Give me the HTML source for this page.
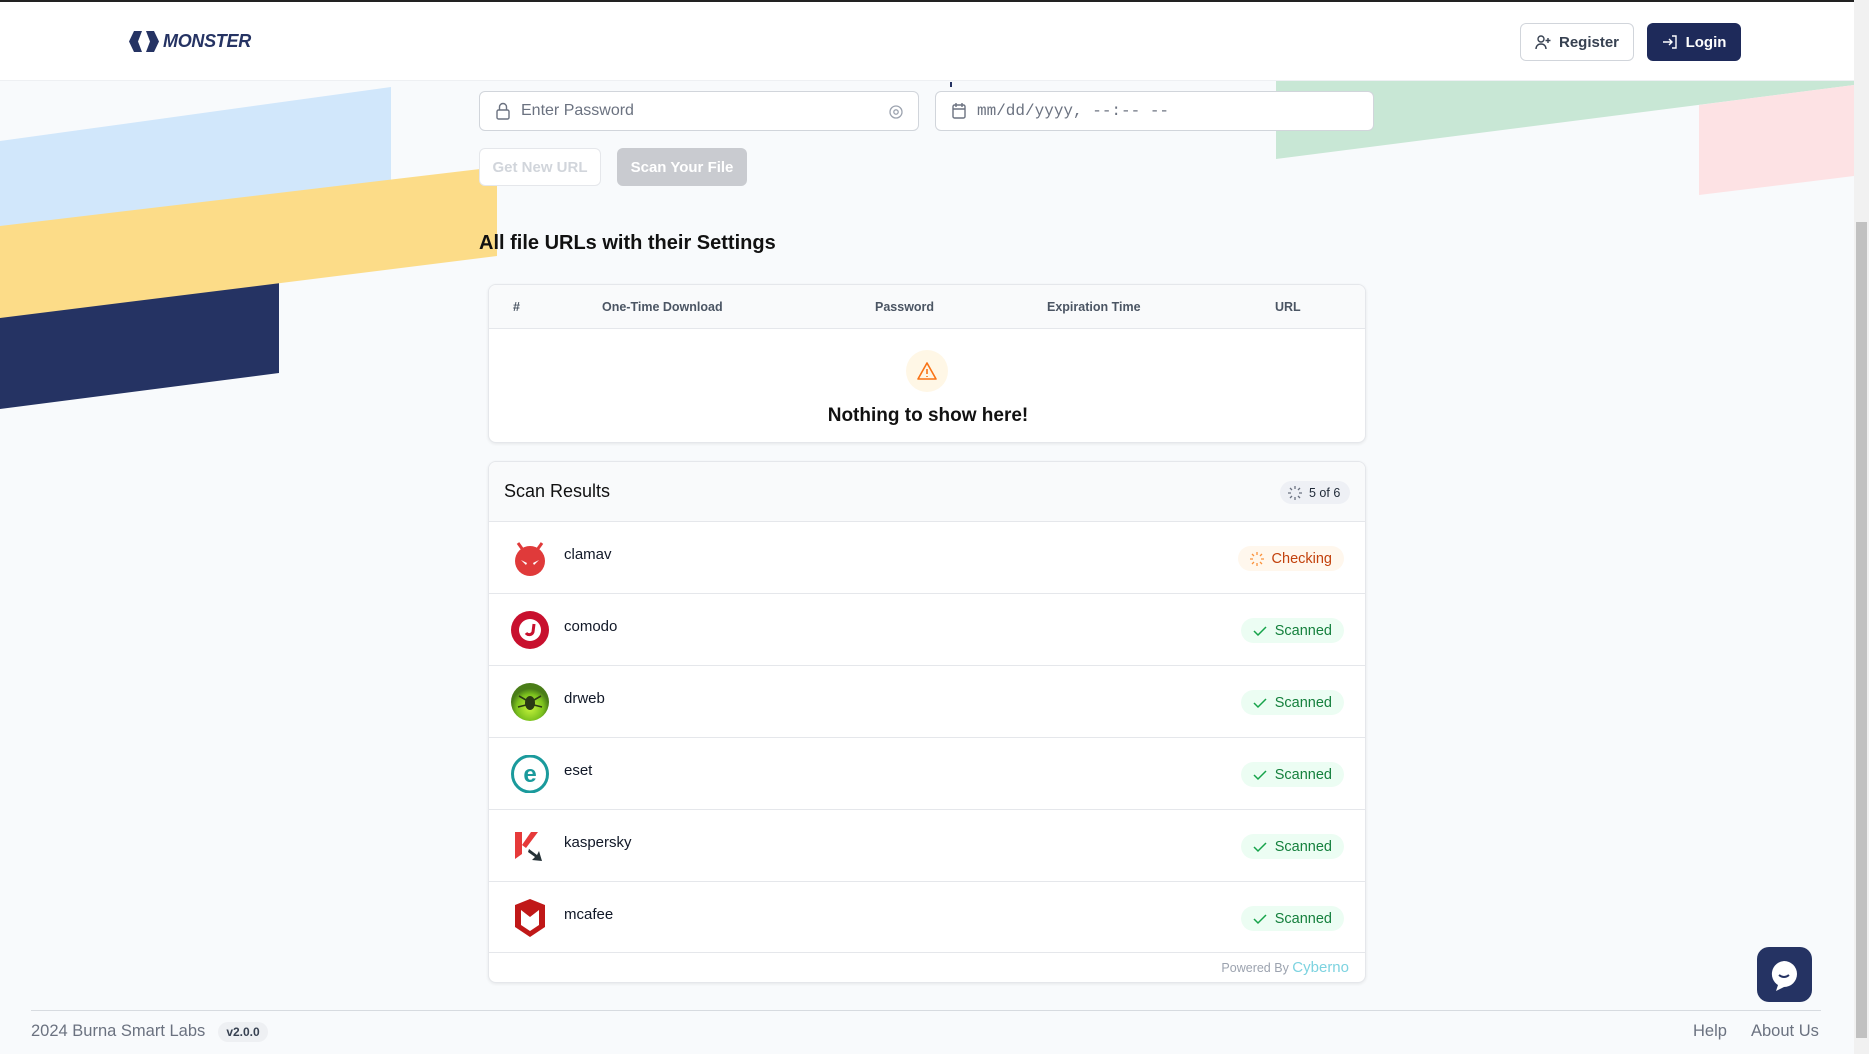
<!DOCTYPE html>
<html><head><meta charset="utf-8"><style>
*{box-sizing:border-box;margin:0;padding:0}
body{width:1869px;height:1054px;overflow:hidden;background:#f8fafc;font-family:"Liberation Sans",sans-serif;position:relative;color:#111827}
.abs{position:absolute}
.hdr{left:0;top:0;width:1854px;height:81px;background:#fff;border-top:2px solid #222;border-bottom:1px solid #eef0f3}
.btn{position:absolute;top:23px;height:38px;border-radius:6px;font-size:15px;font-weight:bold;display:flex;align-items:center;justify-content:center;gap:8px}
.inp{position:absolute;top:91px;height:40px;background:#fff;border:1px solid #d1d5db;border-radius:6px;display:flex;align-items:center;padding-left:15px;gap:10px;color:#6b7280;font-size:16px}
.card{position:absolute;left:488px;width:878px;background:#fff;border:1px solid #e5e7eb;border-radius:8px;box-shadow:0 1px 3px rgba(0,0,0,.08);overflow:hidden}
.th{position:absolute;top:0;line-height:44px;font-size:12.5px;font-weight:bold;color:#4b5563}
.row{position:absolute;left:0;width:878px;height:72px;border-top:1px solid #e5e7eb}
.row .ic{position:absolute;left:22px;top:17px;width:38px;height:38px}
.row .nm{position:absolute;left:75px;top:24px;font-size:15px;color:#111827}
.pill{position:absolute;right:23px;top:24px;height:25px;border-radius:13px;background:#ecfdf3;color:#15803d;font-size:14.5px;display:flex;align-items:center;gap:8px;padding:0 12px}
</style></head><body>
<svg class="abs" style="left:0;top:0" width="1869" height="1054">
<polygon points="0,141 391,87 391,220 0,270" fill="#d1e7fb"/>
<polygon points="0,300 279,268 279,373 0,409" fill="#253363"/>
<polygon points="0,226 497,167 497,256 0,318" fill="#fcdc88"/>
<polygon points="1276,81 1854,81 1854,85 1276,159" fill="#c8e7d5"/>
<polygon points="1699,105 1854,85 1854,176 1699,195" fill="#fde2e4"/>
</svg>
<div class="abs hdr"></div>
<div class="abs" style="left:128px;top:31px;display:flex;align-items:center;gap:3px">
<svg width="32" height="21" viewBox="0 0 32 21"><path d="M6 0h8l-4 10.5 4 10.5H6L1 10.5z" fill="#253363"/><path d="M18 0h8l5 10.5-5 10.5h-8l4-10.5z" fill="#253363"/></svg>
<span style="font-size:18px;font-weight:bold;font-style:italic;color:#253363;letter-spacing:-0.3px">MONSTER</span></div>
<div class="btn" style="left:1520px;width:114px;background:#fff;border:1px solid #d1d5db;color:#374151">
<svg width="16" height="16" viewBox="0 0 16 16" fill="none" stroke="#374151" stroke-width="1.4"><circle cx="6" cy="5" r="3"/><path d="M1 15c0-3 2-5 5-5s5 2 5 5M13 4v5M10.5 6.5h5"/></svg>Register</div>
<div class="btn" style="left:1647px;width:94px;background:#1e2a5a;color:#fff">
<svg width="16" height="16" viewBox="0 0 16 16" fill="none" stroke="#fff" stroke-width="1.4"><path d="M1 8h9M7 5l3 3-3 3M10 2h4v12h-4"/></svg>Login</div>
<div class="abs" style="left:950px;top:82px;width:2px;height:5px;background:#253363"></div>
<div class="inp" style="left:479px;width:440px">
<svg width="16" height="18" viewBox="0 0 16 18" fill="none" stroke="#6b7280" stroke-width="1.4"><rect x="2" y="8" width="12" height="9" rx="1.5"/><path d="M4.5 8V5a3.5 3.5 0 017 0v3"/></svg>Enter Password
<svg class="abs" style="right:14px;top:12px" width="16" height="16" viewBox="0 0 16 16" fill="none" stroke="#9ca3af" stroke-width="1.3"><circle cx="8" cy="8" r="6"/><circle cx="8" cy="8" r="2.2"/></svg></div>
<div class="inp" style="left:935px;width:439px;font-family:'Liberation Mono',monospace;font-size:16px">
<svg width="16" height="18" viewBox="0 0 16 18" fill="none" stroke="#6b7280" stroke-width="1.4"><rect x="2" y="3" width="12" height="13" rx="1.5"/><path d="M2 7h12M5 1v4M11 1v4"/></svg>mm/dd/yyyy, --:-- --</div>
<div class="abs" style="left:479px;top:148px;width:122px;height:38px;background:#fff;border:1px solid #e5e7eb;border-radius:6px;color:#d1d5db;font-size:15px;font-weight:bold;display:flex;align-items:center;justify-content:center">Get New URL</div>
<div class="abs" style="left:617px;top:148px;width:130px;height:38px;background:#c9cbd0;border-radius:6px;color:#fff;font-size:15px;font-weight:bold;display:flex;align-items:center;justify-content:center">Scan Your File</div>
<div class="abs" style="left:479px;top:232px;font-size:20px;font-weight:bold;color:#111">All file URLs with their Settings</div>
<div class="card" style="top:284px;height:159px">
<div class="abs" style="left:0;top:0;width:878px;height:44px;background:#f9fafb;border-bottom:1px solid #e5e7eb"></div>
<div class="th" style="left:24px">#</div><div class="th" style="left:113px">One-Time Download</div><div class="th" style="left:386px">Password</div><div class="th" style="left:558px">Expiration Time</div><div class="th" style="left:786px">URL</div>
<div class="abs" style="left:417px;top:65px;width:42px;height:42px;border-radius:50%;background:#fff7e6;display:flex;align-items:center;justify-content:center">
<svg width="22" height="20" viewBox="0 0 22 20" fill="none" stroke="#f97316" stroke-width="1.6"><path d="M11 2L20 18H2z" stroke-linejoin="round"/><path d="M11 8v5M11 15v1"/></svg></div>
<div class="abs" style="left:0;width:878px;top:120px;text-align:center;font-size:19px;font-weight:bold;color:#111">Nothing to show here!</div>
</div>
<div class="card" style="top:461px;height:522px">
<div class="abs" style="left:0;top:0;width:878px;height:59px;background:#f9fafb"></div>
<div class="abs" style="left:15px;top:19px;font-size:18px;color:#111">Scan Results</div>
<div class="abs" style="left:791px;top:19px;height:23px;width:70px;border-radius:12px;background:#eef0f5;font-size:12.5px;color:#1f2937;display:flex;align-items:center;gap:7px;padding-left:8px">
<svg width="14" height="14" viewBox="0 0 14 14" stroke="#6b7280" stroke-width="1.3"><path d="M7 0v3M7 11v3M0 7h3M11 7h3M2 2l2 2M10 10l2 2M12 2l-2 2M4 10l-2 2"/></svg>5 of 6</div>
<div class="row" style="top:59px">
<svg class="ic" viewBox="0 0 38 38"><path d="M7 4l5 7M31 4l-5 7" stroke="#e03a3a" stroke-width="3"/><circle cx="19" cy="22" r="15" fill="#e03a3a"/><path d="M10 21l6 3-1 2zM28 21l-6 3 1 2z" fill="#fff"/></svg>
<div class="nm">clamav</div>
<div class="pill" style="background:#fff7ed;color:#c2410c"><svg width="14" height="14" viewBox="0 0 14 14" stroke="#fb923c" stroke-width="1.3"><path d="M7 0v3M7 11v3M0 7h3M11 7h3M2 2l2 2M10 10l2 2M12 2l-2 2M4 10l-2 2"/></svg>Checking</div></div>
<div class="row" style="top:131px">
<svg class="ic" viewBox="0 0 38 38"><circle cx="19" cy="19" r="19" fill="#c8102e"/><circle cx="19" cy="19" r="11" fill="#fff"/><path d="M15 22a4 4 0 007-1l1-8" stroke="#c8102e" stroke-width="3" fill="none"/></svg>
<div class="nm">comodo</div><div class="pill"><svg width="14" height="12" viewBox="0 0 14 12" fill="none" stroke="#16a34a" stroke-width="1.5"><path d="M1 6l4 4 8-8"/></svg>Scanned</div></div>
<div class="row" style="top:203px">
<svg class="ic" viewBox="0 0 38 38"><defs><radialGradient id="g" cx=".5" cy=".65"><stop offset="0" stop-color="#c8f53c"/><stop offset=".7" stop-color="#7cc21e"/><stop offset="1" stop-color="#4a7d18"/></radialGradient></defs><circle cx="19" cy="19" r="19" fill="url(#g)"/><ellipse cx="19" cy="20" rx="5" ry="7" fill="#2a3a14"/><path d="M8 13l7 4M30 13l-7 4M7 24l8-2M31 24l-8-2" stroke="#2a3a14" stroke-width="1.6"/></svg>
<div class="nm">drweb</div><div class="pill"><svg width="14" height="12" viewBox="0 0 14 12" fill="none" stroke="#16a34a" stroke-width="1.5"><path d="M1 6l4 4 8-8"/></svg>Scanned</div></div>
<div class="row" style="top:275px">
<svg class="ic" viewBox="0 0 38 38"><ellipse cx="19" cy="19" rx="17.5" ry="18" fill="#fff" stroke="#1a9a9c" stroke-width="3"/><text x="19" y="27" text-anchor="middle" font-family="Liberation Sans" font-weight="bold" font-size="24" fill="#1a9a9c">e</text></svg>
<div class="nm">eset</div><div class="pill"><svg width="14" height="12" viewBox="0 0 14 12" fill="none" stroke="#16a34a" stroke-width="1.5"><path d="M1 6l4 4 8-8"/></svg>Scanned</div></div>
<div class="row" style="top:347px">
<svg class="ic" viewBox="0 0 38 38"><path d="M4 5h7v22l-7 5z" fill="#e63a3a"/><path d="M11 18L20 5h7L15 21z" fill="#e63a3a"/><path d="M18 22l8 6 2-4 3 10-10-1 3-3-7-5z" fill="#263238"/></svg>
<div class="nm">kaspersky</div><div class="pill"><svg width="14" height="12" viewBox="0 0 14 12" fill="none" stroke="#16a34a" stroke-width="1.5"><path d="M1 6l4 4 8-8"/></svg>Scanned</div></div>
<div class="row" style="top:419px">
<svg class="ic" viewBox="0 0 38 38"><path d="M4 6l15-6 15 6v22l-15 10-15-10z" fill="#c01818"/><path d="M10 11l9 7 9-7v15l-9 6-9-6z" fill="#fff"/></svg>
<div class="nm">mcafee</div><div class="pill"><svg width="14" height="12" viewBox="0 0 14 12" fill="none" stroke="#16a34a" stroke-width="1.5"><path d="M1 6l4 4 8-8"/></svg>Scanned</div></div>
<div class="abs" style="left:0;top:490px;width:878px;border-top:1px solid #e5e7eb"></div>
<div class="abs" style="right:16px;top:497px;font-size:12.5px;color:#9ca3af">Powered By <span style="color:#7dd3e0;font-size:15px">Cyberno</span></div>
</div>
<div class="abs" style="left:31px;top:1010px;width:1790px;border-top:1px solid #d7dbe0"></div>
<div class="abs" style="left:31px;top:1022px;font-size:16.5px;color:#6b7280">2024 Burna Smart Labs</div>
<div class="abs" style="left:218px;top:1022px;width:50px;height:20px;border-radius:10px;background:#eef0f3;font-size:12px;font-weight:bold;color:#374151;text-align:center;line-height:20px">v2.0.0</div>
<div class="abs" style="left:1693px;top:1022px;font-size:16.5px;color:#6b7280">Help</div>
<div class="abs" style="left:1751px;top:1022px;font-size:16.5px;color:#6b7280">About Us</div>
<div class="abs" style="left:1757px;top:947px;width:55px;height:55px;border-radius:12px;background:#253363">
<svg width="55" height="55" viewBox="0 0 55 55"><path d="M27 14a13 13 0 110 26l-8 4 2-6a13 13 0 016-24z" fill="#fff"/><path d="M22 28q5 4 10 0" stroke="#253363" stroke-width="2" fill="none"/></svg></div>
<div class="abs" style="left:1854px;top:0;width:15px;height:1054px;background:#f1f1f1"></div>
<div class="abs" style="left:1856px;top:222px;width:11px;height:816px;background:#c1c1c1"></div>
</body></html>
